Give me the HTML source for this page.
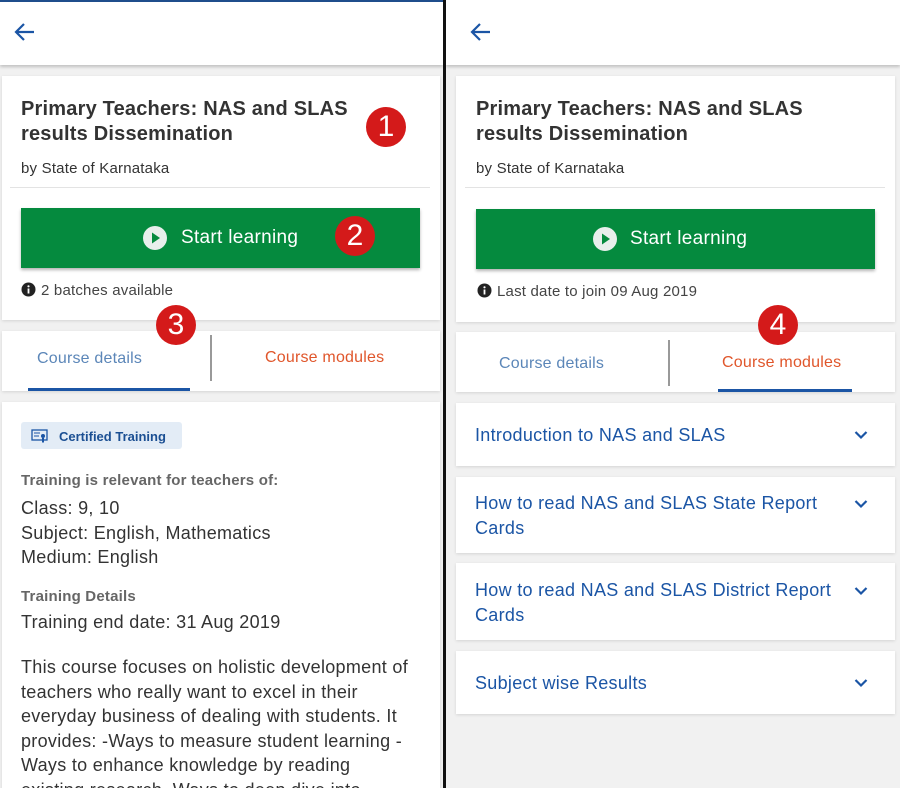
<!DOCTYPE html>
<html><head><meta charset="utf-8"><style>
*{box-sizing:border-box;margin:0;padding:0}
body{width:900px;height:788px;overflow:hidden;background:#fff;font-family:"Liberation Sans",sans-serif;position:relative;color:#333}
.panel{position:absolute;top:0;height:788px;background:#f1f1f1;overflow:hidden}
.hdr{position:absolute;left:0;right:0;top:0;height:65px;background:#fff;box-shadow:0 2px 3px rgba(0,0,0,.2)}
.card{position:absolute;background:#fff;box-shadow:0 1px 3px rgba(0,0,0,.12)}
.abs{position:absolute;white-space:nowrap}
.title{font-size:20px;font-weight:bold;color:#333;line-height:25px;letter-spacing:0.2px}
.btn{position:absolute;height:60px;background:#058a3e;box-shadow:0 2px 3px rgba(0,0,0,.3);color:#fff;font-size:19px;letter-spacing:0.3px}
.badge{position:absolute;width:40px;height:40px;border-radius:50%;background:#d41a1a;color:#fff;font-size:30px;text-align:center;line-height:40px}
.tab{font-size:16px;letter-spacing:0.2px}
.mod{color:#1b55a5;font-size:18px;line-height:25px;letter-spacing:0.3px}
</style></head><body>
<div style="position:absolute;left:0;top:0;width:444px;height:2px;background:#1f4e8c;z-index:5"></div>
<div style="position:absolute;left:443px;top:0;width:3px;height:788px;background:#111;z-index:5"></div>

<div class="panel" style="left:0;width:443px">
 <div class="hdr"><svg class="abs" style="left:14px;top:22px" width="22" height="20" viewBox="0 0 22 20"><path d="M20 10H3M10 2L2 10l8 8" stroke="#1b55a5" stroke-width="2.2" fill="none"/></svg></div>
 <div class="card" style="left:2px;top:76px;width:438px;height:244px"></div>
 <div class="abs title" style="left:21px;top:97px">Primary Teachers: NAS and SLAS<br>results Dissemination</div>
 <div class="abs" style="left:21px;top:160px;font-size:15px;letter-spacing:0.2px">by State of Karnataka</div>
 <div class="abs" style="left:10px;top:187px;width:420px;height:1px;background:#e3e3e3"></div>
 <div class="btn" style="left:21px;top:208px;width:399px"><svg class="abs" style="left:121px;top:17px" width="26" height="26"><circle cx="13" cy="13" r="12" fill="#e8efec"/><path d="M10 7.5l8 5.5-8 5.5z" fill="#058a3e"/></svg><span class="abs" style="left:160px;top:19px">Start learning</span></div>
 <div class="badge" style="left:335px;top:216px">2</div>
 <svg class="abs" style="left:21px;top:282px" width="15" height="15"><circle cx="7.5" cy="7.5" r="7" fill="#222"/><rect x="6.6" y="6.5" width="1.8" height="5" fill="#fff"/><circle cx="7.5" cy="4.3" r="1.1" fill="#fff"/></svg>
 <div class="abs" style="left:41px;top:282px;font-size:15px;color:#444;letter-spacing:0.2px">2 batches available</div>
 <div class="card" style="left:2px;top:331px;width:438px;height:60px"></div>
 <div class="abs tab" style="left:37px;top:350px;color:#5b86b8">Course details</div>
 <div class="abs" style="left:28px;top:388px;width:162px;height:3px;background:#1b55a5"></div>
 <div class="abs" style="left:210px;top:335px;width:2px;height:46px;background:#999"></div>
 <div class="abs tab" style="left:265px;top:349px;color:#e0562b">Course modules</div>
 <div class="badge" style="left:156px;top:305px">3</div>
 <div class="card" style="left:2px;top:402px;width:438px;height:400px"></div>
 <div class="abs" style="left:21px;top:422px;width:161px;height:27px;background:#e3ecf6;border-radius:3px"></div>
 <svg class="abs" style="left:31px;top:428px" width="18" height="16"><rect x="1" y="2" width="15" height="10" fill="none" stroke="#1b55a5" stroke-width="1.3"/><path d="M3 5h6M3 8h5" stroke="#1b55a5"/><circle cx="12" cy="8" r="2" fill="#1b55a5"/><path d="M11 10v5l1-1 1 1v-5" fill="#1b55a5"/></svg>
 <div class="abs" style="left:59px;top:429px;font-size:13px;font-weight:bold;color:#1b4f93">Certified Training</div>
 <div class="abs" style="left:21px;top:472px;font-size:15px;font-weight:bold;color:#666;letter-spacing:0.2px">Training is relevant for teachers of:</div>
 <div class="abs" style="left:21px;top:496px;font-size:18px;line-height:24.5px;color:#333;letter-spacing:0.3px">Class: 9, 10<br>Subject: English, Mathematics<br>Medium: English</div>
 <div class="abs" style="left:21px;top:588px;font-size:15px;font-weight:bold;color:#666;letter-spacing:0.2px">Training Details</div>
 <div class="abs" style="left:21px;top:612px;font-size:18px;color:#333;letter-spacing:0.3px">Training end date: 31 Aug 2019</div>
 <div class="abs" style="left:21px;top:655px;font-size:18px;line-height:24.5px;color:#333;letter-spacing:0.3px">This course focuses on holistic development of<br>teachers who really want to excel in their<br>everyday business of dealing with students. It<br>provides: -Ways to measure student learning -<br>Ways to enhance knowledge by reading<br>existing research. Ways to deep dive into</div>
 <div class="badge" style="left:366px;top:107px">1</div>
</div>

<div class="panel" style="left:446px;width:454px">
 <div class="hdr"><svg class="abs" style="left:24px;top:22px" width="22" height="20" viewBox="0 0 22 20"><path d="M20 10H3M10 2L2 10l8 8" stroke="#1b55a5" stroke-width="2.2" fill="none"/></svg></div>
 <div class="card" style="left:10px;top:76px;width:439px;height:246px"></div>
 <div class="abs title" style="left:30px;top:97px">Primary Teachers: NAS and SLAS<br>results Dissemination</div>
 <div class="abs" style="left:30px;top:160px;font-size:15px;letter-spacing:0.2px">by State of Karnataka</div>
 <div class="abs" style="left:19px;top:187px;width:420px;height:1px;background:#e3e3e3"></div>
 <div class="btn" style="left:30px;top:209px;width:399px"><svg class="abs" style="left:116px;top:17px" width="26" height="26"><circle cx="13" cy="13" r="12" fill="#e8efec"/><path d="M10 7.5l8 5.5-8 5.5z" fill="#058a3e"/></svg><span class="abs" style="left:154px;top:19px">Start learning</span></div>
 <svg class="abs" style="left:31px;top:283px" width="15" height="15"><circle cx="7.5" cy="7.5" r="7" fill="#222"/><rect x="6.6" y="6.5" width="1.8" height="5" fill="#fff"/><circle cx="7.5" cy="4.3" r="1.1" fill="#fff"/></svg>
 <div class="abs" style="left:51px;top:283px;font-size:15px;color:#444;letter-spacing:0.2px">Last date to join 09 Aug 2019</div>
 <div class="card" style="left:10px;top:332px;width:439px;height:60px"></div>
 <div class="abs tab" style="left:53px;top:355px;color:#5b86b8">Course details</div>
 <div class="abs" style="left:222px;top:340px;width:2px;height:46px;background:#999"></div>
 <div class="abs tab" style="left:276px;top:354px;color:#e0562b">Course modules</div>
 <div class="abs" style="left:272px;top:389px;width:134px;height:3px;background:#1b55a5"></div>
 <div class="badge" style="left:312px;top:305px">4</div>
 <div class="card" style="left:10px;top:403px;width:439px;height:63px"></div>
 <div class="abs mod" style="left:29px;top:423px">Introduction to NAS and SLAS</div>
 <div class="card" style="left:10px;top:477px;width:439px;height:76px"></div>
 <div class="abs mod" style="left:29px;top:491px">How to read NAS and SLAS State Report<br>Cards</div>
 <div class="card" style="left:10px;top:563px;width:439px;height:77px"></div>
 <div class="abs mod" style="left:29px;top:578px">How to read NAS and SLAS District Report<br>Cards</div>
 <div class="card" style="left:10px;top:651px;width:439px;height:63px"></div>
 <div class="abs mod" style="left:29px;top:671px">Subject wise Results</div>
 <svg class="abs" style="left:408px;top:430px" width="14" height="10"><path d="M1.5 2l5.5 5.5L12.5 2" stroke="#1b55a5" stroke-width="2.2" fill="none"/></svg>
 <svg class="abs" style="left:408px;top:499px" width="14" height="10"><path d="M1.5 2l5.5 5.5L12.5 2" stroke="#1b55a5" stroke-width="2.2" fill="none"/></svg>
 <svg class="abs" style="left:408px;top:586px" width="14" height="10"><path d="M1.5 2l5.5 5.5L12.5 2" stroke="#1b55a5" stroke-width="2.2" fill="none"/></svg>
 <svg class="abs" style="left:408px;top:678px" width="14" height="10"><path d="M1.5 2l5.5 5.5L12.5 2" stroke="#1b55a5" stroke-width="2.2" fill="none"/></svg>
</div>
</body></html>
